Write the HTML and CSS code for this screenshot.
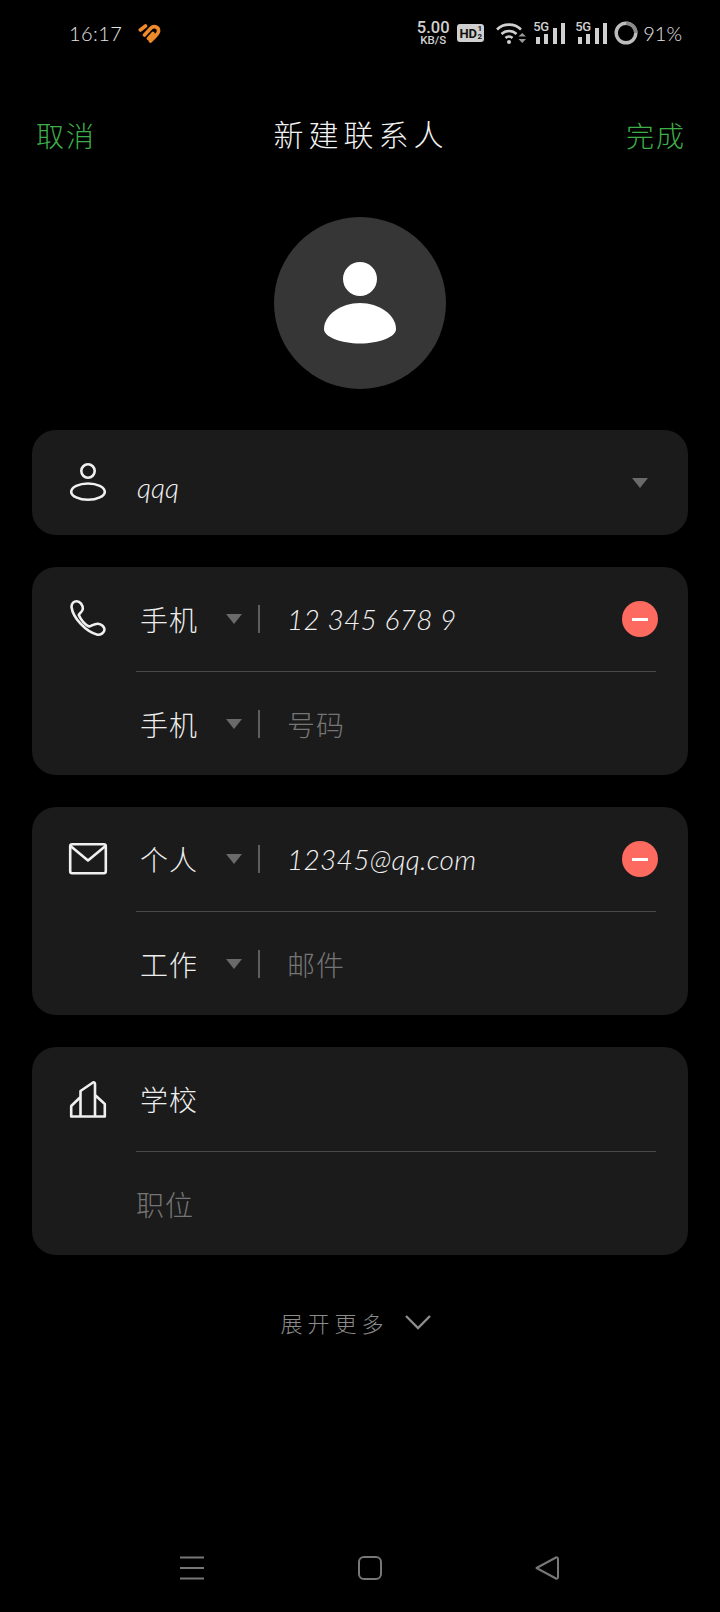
FILE: index.html
```html
<!DOCTYPE html>
<html lang="zh-CN">
<head>
<meta charset="utf-8">
<title>新建联系人</title>
<link rel="stylesheet" href="styles.css">
</head>
<body>
<div class="page">
  <header class="status">
    <div class="status-left">
      <span class="time">16:17</span>
      <svg class="heart" viewBox="0 0 23 20" width="23" height="20"><path d="M2.3 7 L7.5 3 M6.5 12 L13 5 C16 2.2 21 4 20.5 8.5 C20.2 11 15.5 15 12.5 18 M10.5 15.5 L15 10.5" fill="none" stroke="#ef8a2b" stroke-width="3.6" stroke-linecap="round"/></svg>
    </div>
    <div class="status-right">
      <div class="speed"><span class="speed-num">5.00</span><span class="speed-unit">KB/S</span></div>
      <div class="hd"><span>HD</span><span class="hd-sims">1<br>2</span></div>
      <svg class="wifi" viewBox="0 0 31 22" width="31" height="22"><g fill="none" stroke="#d0d0d0" stroke-width="2.6"><path d="M1 7.5 C7.5 1 18.5 1 25 7.5"/><path d="M5.5 12 C9.5 8 16.5 8 20.5 12"/><path d="M9.5 16 C11.5 14 14.5 14 16.5 16"/></g><circle cx="13" cy="20" r="2" fill="#d0d0d0"/><path d="M22.5 14.5 L30 14.5 L26.2 11Z M22.5 17 L30 17 L26.2 21Z" fill="#999"/></svg>
      <div class="signal"><span class="g5">5G</span><i class="b1"></i><i class="b2"></i><i class="b3"></i><i class="b4"></i></div>
      <div class="signal"><span class="g5">5G</span><i class="b1"></i><i class="b2"></i><i class="b3"></i><i class="b4"></i></div>
      <svg class="ring" viewBox="0 0 24 24" width="24" height="24"><circle cx="12" cy="12" r="9.8" fill="none" stroke="#bdbdbd" stroke-width="3.4"/><path d="M12 2.2 A9.8 9.8 0 0 1 21.8 12" fill="none" stroke="#8a8a8a" stroke-width="3.4"/></svg>
      <span class="batt">91%</span>
    </div>
  </header>

  <nav class="topbar">
    <span class="act">取消</span>
    <h1 class="title">新建联系人</h1>
    <span class="act act-right">完成</span>
  </nav>

  <div class="avatar">
    <svg viewBox="0 0 72 82" width="72" height="82"><circle cx="36" cy="17" r="17" fill="#fff"/><path d="M0 67 C0 53 17 41 36 41 C55 41 72 53 72 67 C72 75 55 81.5 36 81.5 C17 81.5 0 75 0 67Z" fill="#fff"/></svg>
  </div>

  <section class="card">
    <div class="icon-col">
      <svg class="icon" viewBox="0 0 40 40" width="40" height="40"><circle cx="20" cy="9" r="6.7"/><path d="M3.2 30 C3.2 25 11 21.5 20 21.5 C29 21.5 36.8 25 36.8 30 C36.8 34 29 37.8 20 37.8 C11 37.8 3.2 34 3.2 30Z"/></svg>
    </div>
    <div class="rows">
      <div class="row row-name">
        <span class="value name-value">qqq</span>
        <i class="tri tri-end"></i>
      </div>
    </div>
  </section>

  <section class="card">
    <div class="icon-col">
      <svg class="icon" viewBox="0 0 40 40" width="40" height="40"><path d="M3.5 8 C3.5 4 6 2.2 8.7 2.2 C12 2.2 15 6 14.8 10 C14.7 12.5 11.5 14 10.8 16 C13 21 17 25.5 21 27.5 C23 27.5 26 24.5 30 24.7 C33.5 25 36.5 28 36.5 30.5 C36.5 33.5 33 36 29.5 35.8 C18 33 5 19 3.5 8Z"/></svg>
    </div>
    <div class="rows">
      <div class="row">
        <span class="label">手机</span><i class="tri"></i><i class="sep"></i>
        <span class="value">12 345 678 9</span>
        <span class="minus"></span>
      </div>
      <div class="row">
        <span class="label">手机</span><i class="tri"></i><i class="sep"></i>
        <span class="hint">号码</span>
      </div>
    </div>
  </section>

  <section class="card">
    <div class="icon-col">
      <svg class="icon" viewBox="0 0 40 40" width="40" height="40"><rect x="2.2" y="5.2" width="35.6" height="29" rx="2"/><path d="M2.5 7 L20 21.5 L37.5 7"/></svg>
    </div>
    <div class="rows">
      <div class="row">
        <span class="label">个人</span><i class="tri"></i><i class="sep"></i>
        <span class="value">12345@qq.com</span>
        <span class="minus"></span>
      </div>
      <div class="row">
        <span class="label">工作</span><i class="tri"></i><i class="sep"></i>
        <span class="hint">邮件</span>
      </div>
    </div>
  </section>

  <section class="card">
    <div class="icon-col">
      <svg class="icon" viewBox="0 0 40 40" width="40" height="40"><path d="M3.2 37.5 L3.2 27 L12.5 18 L12.5 12 L25 3.5 C26 3 27 3.6 27 5 L27 16 L36.8 25 L36.8 37.5Z M12.5 18 L12.5 37.5 M27 16 L27 37.5"/></svg>
    </div>
    <div class="rows">
      <div class="row"><span class="label">学校</span></div>
      <div class="row"><span class="hint">职位</span></div>
    </div>
  </section>

  <div class="more">
    <span class="more-text">展开更多</span>
    <svg viewBox="0 0 28 16" width="28" height="16"><path d="M2 2 L14 14 L26 2" fill="none" stroke="#8c8c8c" stroke-width="2.4"/></svg>
  </div>

  <footer class="softkeys">
    <svg viewBox="0 0 26 24" width="26" height="24"><path d="M1 1.5 H25 M1 12 H25 M1 22.5 H25" stroke="#777" stroke-width="2" fill="none"/></svg>
    <svg viewBox="0 0 24 24" width="24" height="24"><rect x="1" y="1" width="22" height="22" rx="5" fill="none" stroke="#777" stroke-width="2"/></svg>
    <svg viewBox="0 0 24 24" width="24" height="24"><path d="M1.5 12 L21 1.5 C22 1 23 1.6 23 3 L23 21 C23 22.4 22 23 21 22.5Z" fill="none" stroke="#777" stroke-width="2" stroke-linejoin="round"/></svg>
  </footer>
</div>
</body>
</html>
```
FILE: styles.css
```css
* { box-sizing: border-box; margin: 0; padding: 0; }
html, body { background: #000; }
body {
  width: 720px;
  height: 1612px;
  overflow: hidden;
  font-family: "Noto Sans CJK SC", "Noto Sans", sans-serif;
  font-weight: 300;
  color: #eee;
}
.page { height: 1612px; display: flex; flex-direction: column; }

/* status bar */
.status {
  height: 64px;
  padding: 2px 38px 0 69px;
  display: flex;
  align-items: center;
  justify-content: space-between;
}
.status-left { display: flex; align-items: center; gap: 16px; }
.time { font: 300 20px "Lato", sans-serif; letter-spacing: 0.4px; color: #e4e4e4; }
.heart { display: block; }
.status-right { display: flex; align-items: center; }
.speed { display: flex; flex-direction: column; align-items: center; width: 36px; font-family: "Roboto", sans-serif; font-weight: 500; color: #d0d0d0; }
.speed-num { font-size: 16.5px; line-height: 14px; }
.speed-unit { font-size: 11.5px; line-height: 11px; }
.hd {
  margin-left: 6px;
  width: 27px; height: 18px;
  border-radius: 3px;
  background: #cfcfcf;
  color: #111;
  display: flex; align-items: center; justify-content: center; gap: 1px;
  font: 700 13px "Roboto", sans-serif;
  letter-spacing: -0.3px;
}
.hd-sims { font-size: 8px; line-height: 8px; text-align: center; }
.wifi { margin-left: 12px; display: block; }
.signal { position: relative; margin-left: 6px; width: 32px; height: 22px; display: flex; align-items: flex-end; gap: 4.5px; padding-left: 2.5px; }
.signal + .signal { margin-left: 10px; }
.signal i { display: block; width: 4px; background: #d0d0d0; }
.signal .b1 { height: 7px; }
.signal .b2 { height: 10px; }
.signal .b3 { height: 16px; }
.signal .b4 { height: 21px; }
.g5 { position: absolute; left: 0; top: -2px; font: 500 13px/14px "Roboto", sans-serif; color: #d0d0d0; letter-spacing: -0.3px; }
.ring { margin-left: 7px; display: block; }
.batt { margin-left: 5px; font: 300 20px "Lato", sans-serif; color: #e4e4e4; }

/* top bar */
.topbar {
  margin-top: 36px;
  height: 70px;
  padding: 0 34px 0 36px;
  display: flex;
  align-items: center;
  justify-content: space-between;
}
.act { font-size: 28px; letter-spacing: 2px; color: #3fae49; width: 60px; }
.act-right { text-align: right; }
.title { padding-bottom: 4px; font-size: 30px; font-weight: 300; letter-spacing: 5px; color: #f2f2f2; }

/* avatar */
.avatar {
  margin: 47px auto 0;
  width: 172px; height: 172px;
  border-radius: 50%;
  background: #363636;
  display: flex; align-items: center; justify-content: center;
}

/* cards */
.card {
  margin: 32px 32px 0;
  background: #1b1b1b;
  border-radius: 24px;
  display: flex;
}
.avatar + .card { margin-top: 41px; }
.icon-col { width: 104px; height: 104px; flex: none; display: flex; align-items: center; justify-content: center; padding-left: 8px; }
.icon { display: block; fill: none; stroke: #f0f0f0; stroke-width: 2.6; stroke-linejoin: round; }
.rows { flex: 1; margin-right: 32px; display: flex; flex-direction: column; }
.row { height: 104px; display: flex; align-items: center; }
.row-name { height: 105px; }
.row + .row { border-top: 1px solid #4a4a4a; }
.label { width: 90px; padding-left: 4px; font-size: 28px; letter-spacing: 1px; color: #eee; }
.tri { display: block; flex: none; width: 0; height: 0; border-left: 8px solid transparent; border-right: 8px solid transparent; border-top: 10px solid #6a6a6a; }
.tri-end { margin-left: auto; margin-right: 8px; }
.sep { display: block; flex: none; width: 2px; height: 28px; margin: 0 27px 0 16px; background: #5e5e5e; }
.value { font: italic 300 28px "Lato", sans-serif; letter-spacing: 0.3px; color: #f2f2f2; }
.name-value { padding: 8px 0 0 1px; letter-spacing: 0; }
.hint { font-size: 28px; letter-spacing: 1px; color: #757575; }
.minus {
  margin-left: auto;
  margin-right: -2px;
  width: 36px; height: 36px;
  border-radius: 50%;
  background: #ff6a60;
  display: flex; align-items: center; justify-content: center;
}
.minus::before { content: ""; width: 16px; height: 3px; background: #fff; }

/* expand */
.more { margin-top: 47px; height: 40px; padding-right: 8px; display: flex; align-items: center; justify-content: center; gap: 15px; }
.more-text { font-size: 22px; letter-spacing: 5px; color: #8c8c8c; }

/* soft keys */
.softkeys {
  margin-top: auto;
  margin-bottom: 32px;
  padding: 0 161px 0 179px;
  display: flex;
  justify-content: space-between;
}
.softkeys svg { display: block; }
```
